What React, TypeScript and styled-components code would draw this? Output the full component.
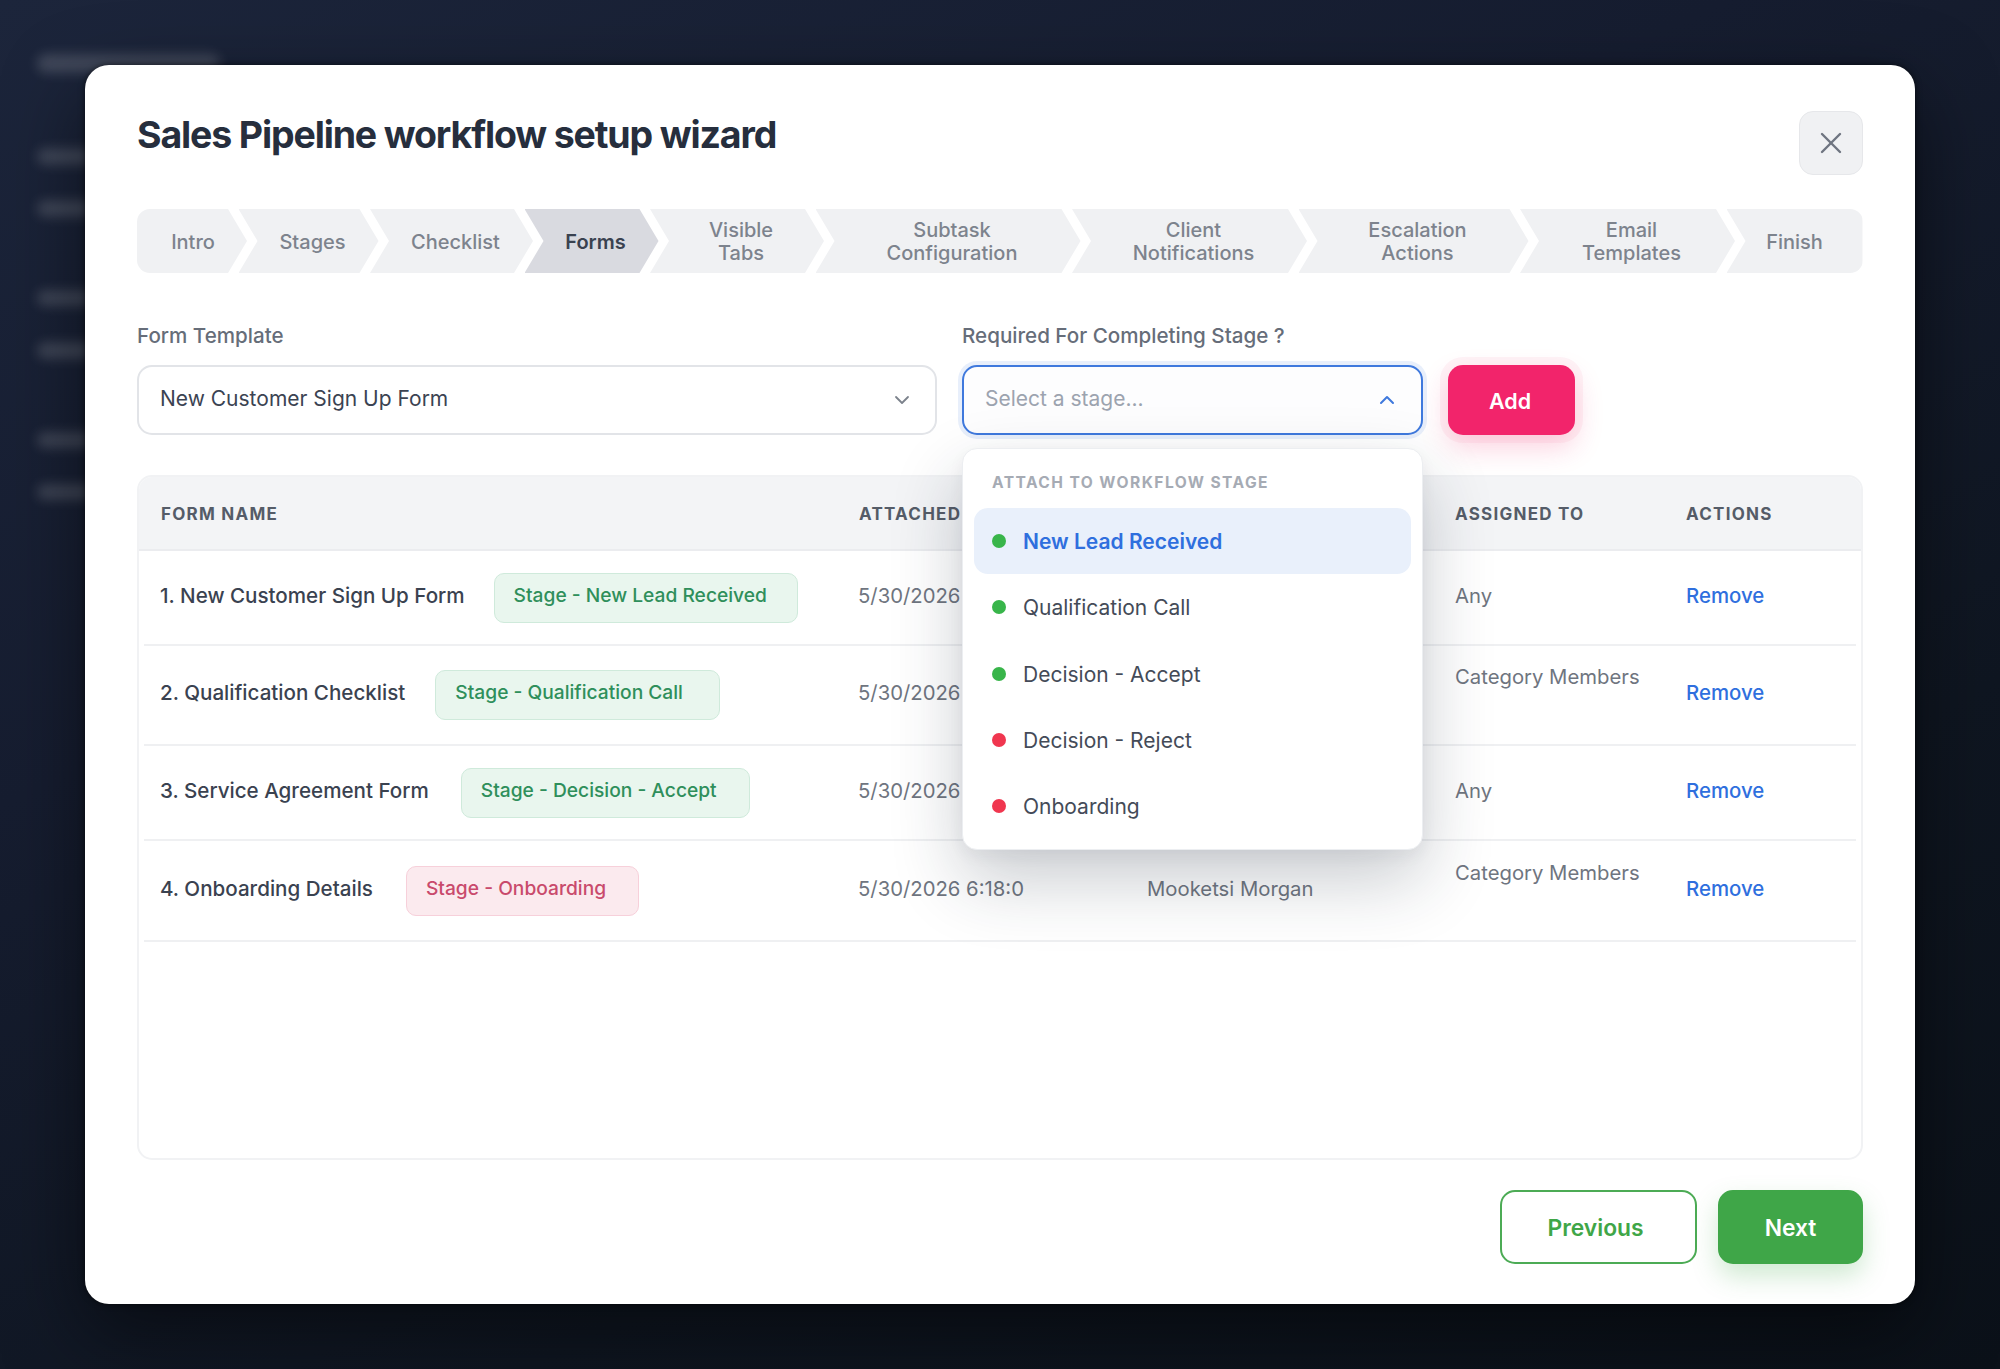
import React from 'react';
import styled, { createGlobalStyle } from 'styled-components';
import { ChevronDown, ChevronUp, X } from 'lucide-react';

const Global = createGlobalStyle`
  html, body { margin: 0; padding: 0; height: 100%; }
  body { font-family: Inter, "Liberation Sans", sans-serif; background: #0d131c; }
  * { box-sizing: border-box; }
`;

const Page = styled.div`
  position: relative;
  width: 2000px;
  height: 1369px;
  overflow: hidden;
  display: flex;
  align-items: center;
  justify-content: center;
  background: linear-gradient(155deg, #1c253b 0%, #161d30 35%, #0f1621 70%, #0b1119 100%);
`;

const Backdrop = styled.div`
  position: absolute;
  left: 37px;
  top: 54px;
  display: flex;
  flex-direction: column;
  filter: blur(6px);
`;

const GhostBar = styled.div<{ $w: number; $top: number; $h: number }>`
  width: ${(p) => p.$w}px;
  height: ${(p) => p.$h}px;
  margin-top: ${(p) => p.$top}px;
  border-radius: 9px;
  background: rgba(255, 255, 255, 0.16);
`;

const Modal = styled.div`
  position: relative;
  width: 1830px;
  height: 1239px;
  display: flex;
  flex-direction: column;
  padding: 46px 52px 40px 52px;
  background: #fff;
  border-radius: 24px;
  box-shadow: 0 30px 80px rgba(0, 0, 0, 0.5), 0 0 6px rgba(0, 0, 0, 0.6);
`;

const Header = styled.div`
  display: flex;
  justify-content: space-between;
  align-items: flex-start;
  height: 64px;
`;

const Title = styled.h1`
  margin: 1px 0 0;
  font-size: 37.5px;
  line-height: 46px;
  font-weight: 700;
  letter-spacing: -1.15px;
  color: #262e3d;
`;

const CloseButton = styled.button`
  width: 64px;
  height: 64px;
  padding: 0;
  display: flex;
  align-items: center;
  justify-content: center;
  color: #6f7580;
  background: #f0f1f3;
  border: 1.5px solid #e6e7ea;
  border-radius: 14px;
`;

const Stepper = styled.div`
  display: flex;
  height: 64px;
  margin-top: 34px;
  border-radius: 13px;
  overflow: hidden;
`;

const NOTCH = 19;

const Step = styled.div<{ $w: number; $pos: 'first' | 'mid' | 'last'; $active?: boolean; $single: boolean }>`
  flex: none;
  width: ${(p) => p.$w}px;
  margin-left: ${(p) => (p.$pos === 'first' ? 0 : -8.5)}px;
  padding-left: ${(p) => (p.$pos === 'mid' ? 8 : p.$pos === 'first' ? 2 : 0)}px;
  padding-top: ${(p) => (p.$single ? 3 : 1)}px;
  display: flex;
  align-items: center;
  justify-content: center;
  text-align: center;
  font-size: 20px;
  line-height: 23px;
  font-weight: ${(p) => (p.$active ? 600 : 500)};
  color: ${(p) => (p.$active ? '#3a4250' : '#7d838d')};
  background: ${(p) => (p.$active ? '#d9dae0' : '#f0f1f3')};
  clip-path: ${(p) =>
    p.$pos === 'first'
      ? `polygon(0 0, calc(100% - ${NOTCH}px) 0, 100% 50%, calc(100% - ${NOTCH}px) 100%, 0 100%)`
      : p.$pos === 'last'
      ? `polygon(0 0, 100% 0, 100% 100%, 0 100%, ${NOTCH}px 50%)`
      : `polygon(0 0, calc(100% - ${NOTCH}px) 0, 100% 50%, calc(100% - ${NOTCH}px) 100%, 0 100%, ${NOTCH}px 50%)`};
`;

const FormRow = styled.div`
  display: flex;
  align-items: flex-end;
  margin-top: 50px;
`;

const Field = styled.div<{ $w: number; $gap: number }>`
  position: relative;
  width: ${(p) => p.$w}px;
  margin-right: ${(p) => p.$gap}px;
  display: flex;
  flex-direction: column;
  gap: 17px;
`;

const Label = styled.label`
  padding-top: 1px;
  font-size: 20.6px;
  line-height: 24px;
  font-weight: 500;
  color: #666d79;
`;

const SelectBox = styled.div<{ $open?: boolean }>`
  height: 70px;
  padding: 0 ${(p) => (p.$open ? 22 : 21)}px 4px 21px;
  display: flex;
  align-items: center;
  justify-content: space-between;
  font-size: 21px;
  color: ${(p) => (p.$open ? '#9ca3af' : '#3b4352')};
  background: ${(p) => (p.$open ? '#fdfdfe' : '#fff')};
  border: 2px solid ${(p) => (p.$open ? '#3f79dd' : '#e2e4e8')};
  border-radius: 15px;
  box-shadow: ${(p) => (p.$open ? '0 0 0 4px rgba(63, 121, 221, 0.12)' : 'none')};
  svg {
    flex: none;
    margin-top: 3px;
    color: ${(p) => (p.$open ? '#3f79dd' : '#7c828c')};
  }
`;

const AddButton = styled.button`
  width: 127px;
  height: 70px;
  padding: 1px 3px 0 0;
  font: 600 21.5px Inter, sans-serif;
  color: #fff;
  background: #f2246b;
  border: 0;
  border-radius: 15px;
  box-shadow: 0 12px 28px rgba(242, 36, 107, 0.22), 0 0 0 8px rgba(242, 36, 107, 0.05);
`;

const Dropdown = styled.div`
  position: absolute;
  z-index: 5;
  left: 0;
  right: 0;
  top: 125px;
  height: 402px;
  padding: 22px 11px 11px;
  background: #fff;
  border: 1.5px solid #eceef1;
  border-radius: 15px;
  box-shadow: 0 30px 70px rgba(30, 41, 59, 0.24), 0 6px 16px rgba(30, 41, 59, 0.05);
`;

const DropHeading = styled.div`
  padding-left: 18px;
  height: 24px;
  line-height: 24px;
  font-size: 15.6px;
  font-weight: 700;
  letter-spacing: 1.42px;
  color: #a6abb4;
`;

const Options = styled.div`
  margin-top: 13px;
  display: flex;
  flex-direction: column;
`;

const Option = styled.div<{ $active?: boolean }>`
  height: 66.3px;
  flex: none;
  padding: 1px 18px 0;
  display: flex;
  align-items: center;
  gap: 17px;
  font-size: 21px;
  font-weight: ${(p) => (p.$active ? 600 : 400)};
  color: ${(p) => (p.$active ? '#2f6fde' : '#444b58')};
  background: ${(p) => (p.$active ? '#e9f0fb' : 'transparent')};
  border-radius: 14px;
`;

const Dot = styled.span<{ $tone: 'green' | 'red' }>`
  flex: none;
  width: 14px;
  height: 14px;
  border-radius: 50%;
  margin-top: -1px;
  background: ${(p) => (p.$tone === 'green' ? '#38b54a' : '#f0364f')};
`;

const TableCard = styled.div`
  flex: 1;
  margin-top: 40px;
  border: 2px solid #f1f2f4;
  border-radius: 15px;
  overflow: hidden;
`;

const HeadRow = styled.div`
  display: grid;
  grid-template-columns: 698px 288px 308px 231px 1fr;
  align-items: center;
  height: 74px;
  padding: 1px 0 0 22px;
  background: #f3f4f6;
  border-bottom: 2px solid #ebecef;
`;

const HeadCell = styled.div`
  font-size: 17px;
  font-weight: 700;
  letter-spacing: 1.25px;
  white-space: nowrap;
  color: #555c68;
`;

const Row = styled.div<{ $h: number }>`
  display: grid;
  grid-template-columns: 698px 289px 308px 231px 1fr;
  align-items: center;
  height: ${(p) => p.$h}px;
  margin: 0 5px;
  padding: 0 0 5px 16px;
  border-bottom: 2px solid #eff0f2;
`;

const NameCell = styled.div<{ $gap: number }>`
  display: flex;
  align-items: center;
  gap: ${(p) => p.$gap}px;
`;

const FormName = styled.span`
  font-size: 20.6px;
  font-weight: 500;
  color: #3a4250;
  white-space: nowrap;
`;

const Badge = styled.span<{ $tone: 'green' | 'red'; $pr: number }>`
  height: 50px;
  margin-top: 5px;
  padding: 0 ${(p) => p.$pr}px 6px 19px;
  display: flex;
  align-items: center;
  font-size: 19.2px;
  font-weight: 500;
  white-space: nowrap;
  border-radius: 10px;
  color: ${(p) => (p.$tone === 'green' ? '#2f8f5b' : '#c94a6c')};
  background: ${(p) => (p.$tone === 'green' ? '#e9f6ee' : '#fbeaee')};
  border: 1.5px solid ${(p) => (p.$tone === 'green' ? '#cfeadb' : '#f7d0da')};
`;

const TextCell = styled.div<{ $lifted?: boolean }>`
  font-size: 20.3px;
  color: #6f7580;
  white-space: nowrap;
  margin-bottom: ${(p) => (p.$lifted ? 32 : 0)}px;
`;

const RemoveLink = styled.a`
  font-size: 20.4px;
  font-weight: 500;
  color: #2f6fde;
`;

const Footer = styled.div`
  margin-top: 30px;
  display: flex;
  justify-content: flex-end;
  gap: 21px;
`;

const FooterButton = styled.button<{ $primary?: boolean }>`
  width: ${(p) => (p.$primary ? 145 : 197)}px;
  height: 74px;
  padding: 0 ${(p) => (p.$primary ? 0 : 6)}px 0 0;
  font: 600 22.8px Inter, sans-serif;
  border-radius: 15px;
  color: ${(p) => (p.$primary ? '#fff' : '#3fa648')};
  background: ${(p) => (p.$primary ? '#3fa648' : '#fff')};
  border: 2px solid ${(p) => (p.$primary ? '#3fa648' : '#4cab55')};
  box-shadow: ${(p) => (p.$primary ? '0 12px 26px rgba(63, 166, 72, 0.25)' : 'none')};
`;

type Tone = 'green' | 'red';

const steps: { label: React.ReactNode; w: number; active?: boolean }[] = [
  { label: 'Intro', w: 110 },
  { label: 'Stages', w: 140 },
  { label: 'Checklist', w: 163 },
  { label: 'Forms', w: 134, active: true },
  { label: <>Visible<br />Tabs</>, w: 174 },
  { label: <>Subtask<br />Configuration</>, w: 265 },
  { label: <>Client<br />Notifications</>, w: 235 },
  { label: <>Escalation<br />Actions</>, w: 230 },
  { label: <>Email<br />Templates</>, w: 215 },
  { label: 'Finish', w: 136 },
];

const stages: { name: string; tone: Tone; active?: boolean }[] = [
  { name: 'New Lead Received', tone: 'green', active: true },
  { name: 'Qualification Call', tone: 'green' },
  { name: 'Decision - Accept', tone: 'green' },
  { name: 'Decision - Reject', tone: 'red' },
  { name: 'Onboarding', tone: 'red' },
];

const rows: { name: string; stage: string; tone: Tone; by?: string; assigned: string; lifted?: boolean; h: number; gap: number; pr: number }[] = [
  { name: '1. New Customer Sign Up Form', stage: 'Stage - New Lead Received', tone: 'green', assigned: 'Any', h: 95, gap: 29, pr: 30 },
  { name: '2. Qualification Checklist', stage: 'Stage - Qualification Call', tone: 'green', assigned: 'Category Members', lifted: true, h: 100, gap: 30, pr: 36 },
  { name: '3. Service Agreement Form', stage: 'Stage - Decision - Accept', tone: 'green', assigned: 'Any', h: 95, gap: 32, pr: 32 },
  { name: '4. Onboarding Details', stage: 'Stage - Onboarding', tone: 'red', by: 'Mooketsi Morgan', assigned: 'Category Members', lifted: true, h: 101, gap: 33, pr: 32 },
];

const ghosts = [
  { w: 183, top: 0, h: 19 },
  { w: 140, top: 75, h: 17 },
  { w: 140, top: 35, h: 17 },
  { w: 140, top: 73, h: 16 },
  { w: 140, top: 36, h: 17 },
  { w: 140, top: 73, h: 16 },
  { w: 140, top: 36, h: 16 },
];

export default function App() {
  return (
    <Page>
      <Global />
      <Backdrop>
        {ghosts.map((g, i) => (
          <GhostBar key={i} $w={g.w} $top={g.top} $h={g.h} />
        ))}
      </Backdrop>
      <Modal>
        <Header>
          <Title>Sales Pipeline workflow setup wizard</Title>
          <CloseButton aria-label="Close">
            <X size={36} strokeWidth={1.6} />
          </CloseButton>
        </Header>

        <Stepper>
          {steps.map((s, i) => (
            <Step
              key={i}
              $w={s.w}
              $active={s.active}
              $single={typeof s.label === 'string'}
              $pos={i === 0 ? 'first' : i === steps.length - 1 ? 'last' : 'mid'}
            >
              <span>{s.label}</span>
            </Step>
          ))}
        </Stepper>

        <FormRow>
          <Field $w={800} $gap={25}>
            <Label>Form Template</Label>
            <SelectBox>
              New Customer Sign Up Form
              <ChevronDown size={24} strokeWidth={1.8} />
            </SelectBox>
          </Field>
          <Field $w={461} $gap={25}>
            <Label>Required For Completing Stage ?</Label>
            <SelectBox $open>
              Select a stage...
              <ChevronUp size={24} strokeWidth={2} />
            </SelectBox>
            <Dropdown>
              <DropHeading>ATTACH TO WORKFLOW STAGE</DropHeading>
              <Options>
                {stages.map((s) => (
                  <Option key={s.name} $active={s.active}>
                    <Dot $tone={s.tone} />
                    {s.name}
                  </Option>
                ))}
              </Options>
            </Dropdown>
          </Field>
          <AddButton>Add</AddButton>
        </FormRow>

        <TableCard>
          <HeadRow>
            <HeadCell>FORM NAME</HeadCell>
            <HeadCell>ATTACHED</HeadCell>
            <HeadCell />
            <HeadCell>ASSIGNED TO</HeadCell>
            <HeadCell>ACTIONS</HeadCell>
          </HeadRow>
          {rows.map((r) => (
            <Row key={r.name} $h={r.h}>
              <NameCell $gap={r.gap}>
                <FormName>{r.name}</FormName>
                <Badge $tone={r.tone} $pr={r.pr}>{r.stage}</Badge>
              </NameCell>
              <TextCell>5/30/2026 6:18:0</TextCell>
              <TextCell>{r.by}</TextCell>
              <TextCell $lifted={r.lifted}>{r.assigned}</TextCell>
              <RemoveLink>Remove</RemoveLink>
            </Row>
          ))}
        </TableCard>

        <Footer>
          <FooterButton>Previous</FooterButton>
          <FooterButton $primary>Next</FooterButton>
        </Footer>
      </Modal>
    </Page>
  );
}
